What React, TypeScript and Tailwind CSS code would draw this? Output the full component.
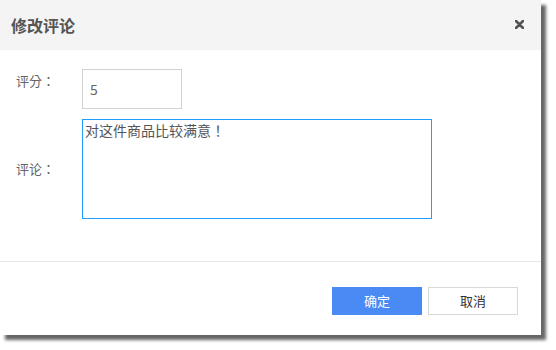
import React from 'react';

const font = { fontFamily: '"Noto Sans CJK SC", "Liberation Sans", sans-serif' };
// 全角标点居中显示
const punct = { fontFamily: '"Noto Sans CJK TC", "Noto Sans CJK SC", sans-serif' };

export default function App() {
  return (
    <div className="w-[556px] h-[350px] bg-white" style={font}>
      <div className="w-[541px] h-[335px] bg-white flex flex-col shadow-[5px_5px_3px_rgba(0,0,0,0.6)]">
        {/* 标题栏 */}
        <div className="h-[50px] bg-[#f4f4f4] flex items-center justify-between pl-[11px] pr-[17px]">
          <span className="text-[16px] font-bold text-[#555]">修改评论</span>
          <svg width="9" height="9" viewBox="0 0 9 9" className="mt-[-1px]">
            <path d="M1 1 L8 8 M8 1 L1 8" stroke="#555" strokeWidth="2.6" strokeLinecap="round" />
          </svg>
        </div>

        {/* 表单 */}
        <div className="h-[211px] pt-[19px] flex flex-col gap-[10px] text-[13px] text-[#666]">
          <div className="flex items-start">
            <label className="w-[82px] pl-[16px] pt-[2px] leading-[20px]" style={punct}>评分：</label>
            <input
              defaultValue="5"
              className="w-[100px] h-[40px] border border-[#d2d2d2] px-[7px] text-[14px] text-[#666] outline-none"
            />
          </div>
          <div className="flex items-center">
            <label className="w-[82px] pl-[16px]" style={punct}>评论：</label>
            <textarea
              defaultValue="对这件商品比较满意！"
              style={punct}
              className="w-[350px] h-[100px] border border-[#1e9fff] px-[2px] pt-0 text-[14px] leading-[20px] text-[#555] resize-none outline-none"
            />
          </div>
        </div>

        {/* 底部按钮 */}
        <div className="border-t border-[#e6e6e6] flex justify-end gap-[6px] pt-[25px] pr-[23px]">
          <button className="w-[90px] h-[28px] bg-[#4a8af4] text-white text-[13px]">确定</button>
          <button className="w-[90px] h-[28px] border border-[#d9d9d9] bg-white text-[#333] text-[13px]">取消</button>
        </div>
      </div>
    </div>
  );
}
